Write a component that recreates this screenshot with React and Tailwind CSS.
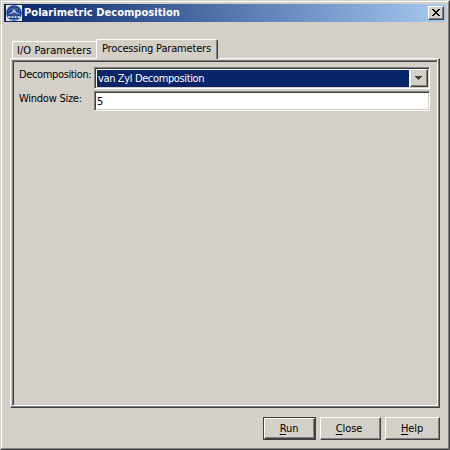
import React from "react";

const raised =
  "border border-t-white border-l-white border-r-[#404040] border-b-[#404040] shadow-[inset_-1px_-1px_0_#808080]";
const sunken =
  "border border-t-[#808080] border-l-[#808080] border-r-white border-b-white shadow-[inset_1px_1px_0_#404040,inset_-1px_-1px_0_#d4d0c8]";

function GlobeIcon() {
  return (
    <svg width="16" height="16" viewBox="0 0 16 16" className="shrink-0">
      <rect width="16" height="16" fill="#dfe7f5" />
      <circle cx="8" cy="8" r="7.8" fill="#23448c" />
      <path d="M2 6.500Q8 1 14 6.500M4 4Q8 2 12 4" fill="none" stroke="#4a6cb0" strokeWidth=".8" />
      <path d="M1.500 9.500 6 7 7 4.500h2L10 7l4.500 2.500L10 8.500 8 7.500 6 8.500Z" fill="#a9bfe6" />
      <path d="M7 9h2v1.500H7Z" fill="#8a4a70" />
      <path d="M2 12h2.500M5.500 12h2M8.500 12h2M11.500 12H14" stroke="#e8effb" strokeWidth="1.300" />
      <path d="M4 14.200q4 1 8 0" fill="none" stroke="#6f94cf" strokeWidth=".7" />
    </svg>
  );
}

function DialogButton({ label, className }) {
  return (
    <button className={`text-center tracking-[-0.1px] ${raised} ${className}`}>
      <span className="underline underline-offset-2">{label[0]}</span>
      {label.slice(1)}
    </button>
  );
}

export default function App() {
  return (
    <div className="h-[450px] w-[450px] overflow-hidden border border-t-[#d4d0c8] border-l-[#d4d0c8] border-r-[#404040] border-b-[#404040] bg-[#d4d0c8] font-['DejaVu_Sans_Condensed','DejaVu_Sans',sans-serif] text-[11px] leading-[14px] text-black [font-stretch:condensed]">
      <div className="flex h-full flex-col border border-t-white border-l-white border-r-[#808080] border-b-[#808080] p-[2px]">
        <header className="flex h-[18px] shrink-0 items-center bg-linear-to-r from-[#0a246a] to-[#a6caf0] pr-[2px] pl-[2px]">
          <GlobeIcon />
          <h1 className="ml-[2px] grow text-[11px] font-bold tracking-[0.04px] text-white">Polarimetric Decomposition</h1>
          <button className={`flex h-[14px] w-4 items-center justify-center bg-[#d4d0c8] pr-px pb-px ${raised}`}>
            <svg width="8" height="7" viewBox="0 0 8 7" shapeRendering="crispEdges">
              <path d="M0 0h2v1h1v1h2V1h1V0h2v1H7v1H6v1H5v1h1v1h1v1h1v1H6V6H5V5H3v1H2v1H0V6h1V5h1V4h1V3H2V2H1V1H0Z" />
            </svg>
          </button>
        </header>

        <main className="mt-[17px] ml-[6px] w-[430px]">
          <nav className="flex h-[19px] items-end pl-[2px]">
            <div className="h-[17px] w-[84px] rounded-tl-[2px] border border-r-0 border-b-0 border-white pt-[2px] pl-[4px] tracking-[0.05px] whitespace-nowrap">
              I/O Parameters
            </div>
            <div className="z-10 -mb-px h-5 w-[122px] rounded-t-[2px] border border-b-0 border-t-white border-l-white border-r-[#404040] bg-[#d4d0c8] pt-[2px] pl-[5px] tracking-[-0.17px] whitespace-nowrap shadow-[inset_-1px_0_0_#808080]">
              Processing Parameters
            </div>
          </nav>
          <section className={`h-[350px] p-px ${raised}`}>
            <div className="h-full border border-t-[#808080] border-l-[#808080] border-r-white border-b-white pt-[6px] pl-[6px] shadow-[inset_1px_1px_0_#404040]">
              <div className="grid grid-cols-[75px_336px] gap-y-[2px]">
                <label className="pt-px tracking-[-0.36px] whitespace-nowrap">Decomposition:</label>
                <div className={`flex h-[22px] bg-white p-px ${sunken}`}>
                  <div className="mt-px ml-px grow bg-[#0a246a] pt-[2px] pl-px tracking-[-0.37px] text-white">van Zyl Decomposition</div>
                  <div className={`ml-px flex w-[18px] items-center justify-center bg-[#d4d0c8] pr-px ${raised}`}>
                    <svg width="7" height="4" viewBox="0 0 7 4" shapeRendering="crispEdges">
                      <path d="M0 0h7v1H6v1H5v1H4v1H3V3H2V2H1V1H0Z" fill="#404040" />
                    </svg>
                  </div>
                </div>
                <label className="pt-px tracking-[-0.25px] whitespace-nowrap">Window Size:</label>
                <div className={`h-5 bg-white pt-[3px] pl-[2px] ${sunken}`}>5</div>
              </div>
            </div>
          </section>
        </main>

        <footer className="mt-[9px] flex gap-1 pl-[259px]">
          <div className="flex h-[23px] w-[53px] border border-[#404040]">
            <DialogButton label="Run" className="h-[21px] w-[51px] pr-px" />
          </div>
          <DialogButton label="Close" className="h-[23px] w-[61px] pr-[3px]" />
          <DialogButton label="Help" className="h-[23px] w-[55px] pr-px" />
        </footer>
      </div>
    </div>
  );
}
